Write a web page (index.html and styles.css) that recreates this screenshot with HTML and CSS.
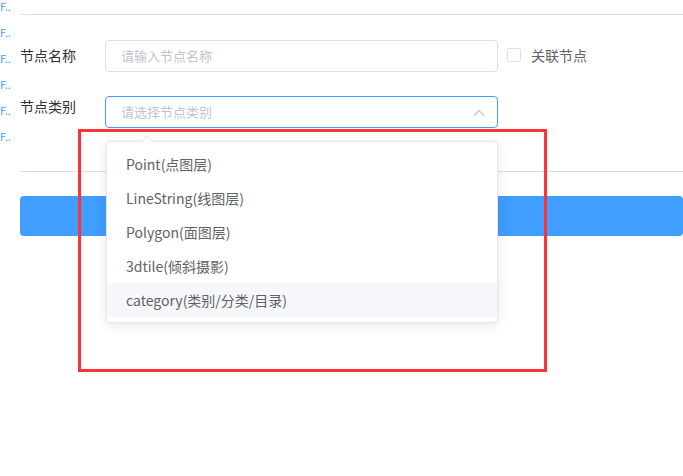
FILE: index.html
```html
<!DOCTYPE html>
<html lang="zh-CN">
<head>
	<meta charset="UTF-8">
	<title>节点编辑</title>
	<link rel="stylesheet" href="styles.css">
</head>
<body>
	<div id="wrapper">
		<!-- left tree, mostly hidden -->
		<ul class="tree">
			<li>F..</li>
			<li>F..</li>
			<li>F..</li>
			<li>F..</li>
			<li>F..</li>
			<li>F..</li>
		</ul>

		<div class="panel">
			<div class="divider first"></div>

			<div class="form">
				<div class="form-row row-name">
					<label class="form-label">节点名称</label>
					<div class="input">请输入节点名称</div>
					<label class="checkbox"><span class="box"></span>关联节点</label>
				</div>

				<div class="form-row row-type">
					<label class="form-label">节点类别</label>
					<div class="select-wrap">
						<div class="input select is-focus">
							<span>请选择节点类别</span>
							<svg class="arrow" width="12" height="7" viewBox="0 0 12 7">
								<path d="M1 6.5 L6 1.5 L11 6.5" fill="none" stroke="#c0c4cc" stroke-width="1.2"/>
							</svg>
						</div>
						<!-- dropdown sits over the content below -->
						<div class="dropdown">
							<span class="popper-arrow"></span>
							<ul>
								<li>Point(点图层)</li>
								<li>LineString(线图层)</li>
								<li>Polygon(面图层)</li>
								<li>3dtile(倾斜摄影)</li>
								<li class="hover">category(类别/分类/目录)</li>
							</ul>
						</div>
					</div>
				</div>
			</div>

			<div class="divider second"></div>
			<button class="btn-primary"></button>
		</div>

		<div class="mark"></div>
	</div>
</body>
</html>
```

FILE: styles.css
```css
body {
	margin: 0;
	background-color: #fff;
	font-family: "Microsoft YaHei", "Noto Sans CJK SC", sans-serif;
	color: #606266;
	overflow: hidden;
}
#wrapper {
	position: relative;
	display: flex;
	height: 476px;
}
.tree {
	list-style: none;
	margin: 0;
	padding: 0;
	width: 11px;
	flex-shrink: 0;
}
.tree li {
	height: 26px;
	line-height: 12px;
	font-size: 11px;
	color: #409eff;
	white-space: nowrap;
	letter-spacing: -0.3px;
}
.panel {
	flex: 1;
	padding-left: 9px;
}
.divider {
	height: 1px;
	background-color: #dcdfe6;
}
.divider.first {
	margin-top: 14px;
}
.form {
	padding-top: 25px;
}
.form-row {
	display: flex;
	align-items: flex-start;
	height: 32px;
}
.row-type {
	margin-top: 24px;
}
.form-label {
	width: 85px;
	font-size: 14px;
	color: #303133;
	line-height: 31px;
}
.row-type .form-label {
	line-height: 20px;
}
.input {
	box-sizing: border-box;
	width: 393px;
	height: 32px;
	border: 1px solid #dcdfe6;
	border-radius: 4px;
	padding: 0 15px;
	font-size: 13px;
	line-height: 30px;
	color: #c0c4cc;
}
.select {
	display: flex;
	justify-content: space-between;
	align-items: center;
}
.select.is-focus {
	border-color: #409eff;
}
.arrow {
	margin-right: -3px;
}
.checkbox {
	display: flex;
	align-items: center;
	margin-left: 9px;
	height: 30px;
	font-size: 14px;
	color: #606266;
}
.checkbox .box {
	box-sizing: border-box;
	width: 14px;
	height: 14px;
	border: 1px solid #dcdfe6;
	border-radius: 2px;
	margin-right: 10px;
}
.select-wrap {
	position: relative;
}
.dropdown {
	position: absolute;
	top: 45px;
	left: 1px;
	width: 392px;
	box-sizing: border-box;
	background: #fff;
	border: 1px solid #e4e7ed;
	border-radius: 4px;
	box-shadow: 0 2px 12px 0 rgba(0, 0, 0, 0.1);
	z-index: 10;
}
.dropdown ul {
	list-style: none;
	margin: 0;
	padding: 5px 0;
}
.dropdown li {
	height: 34px;
	line-height: 34px;
	padding: 0 19px;
	font-size: 14px;
	color: #606266;
}
.dropdown li.hover {
	background-color: #f5f7fa;
}
.popper-arrow {
	position: absolute;
	top: -6px;
	left: 34px;
	width: 0;
	height: 0;
	border-left: 6px solid transparent;
	border-right: 6px solid transparent;
	border-bottom: 6px solid #e4e7ed;
}
.popper-arrow::after {
	content: "";
	position: absolute;
	top: 1px;
	left: -6px;
	border-left: 6px solid transparent;
	border-right: 6px solid transparent;
	border-bottom: 6px solid #fff;
}
.divider.second {
	margin-top: 43px;
}
.btn-primary {
	display: block;
	width: 100%;
	height: 40px;
	margin-top: 24px;
	border: none;
	border-radius: 4px;
	background-color: #409eff;
}
.mark {
	position: absolute;
	left: 78px;
	top: 129px;
	width: 463px;
	height: 237px;
	border: 3px solid #f33;
}
```
